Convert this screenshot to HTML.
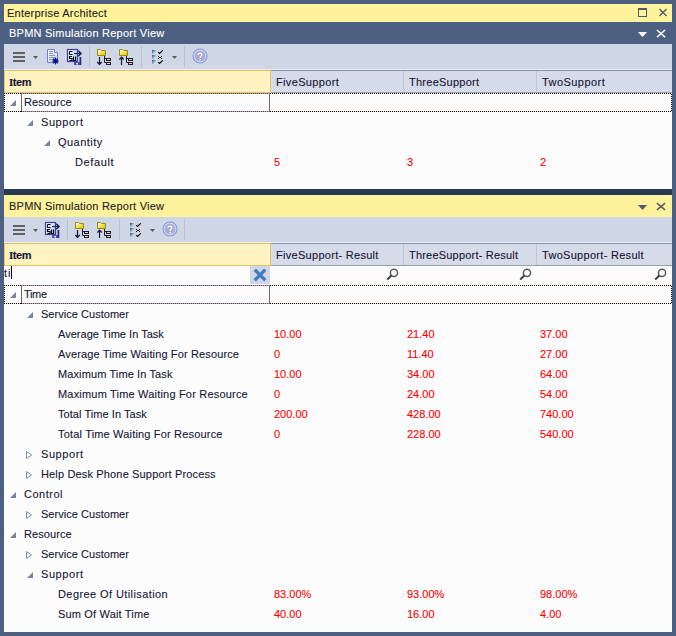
<!DOCTYPE html>
<html><head><meta charset="utf-8"><style>
html,body{margin:0;padding:0;}
body{width:676px;height:636px;overflow:hidden;position:relative;background:#4d6082;font-family:"Liberation Sans", sans-serif;font-size:11px;}
body>div{position:absolute;}
.t{white-space:pre;line-height:13px;height:13px;-webkit-text-stroke:0.1px currentColor;}
</style></head><body>
<div style="left:4px;top:4px;width:668px;height:18px;background:#fff29d;"></div>
<div class="t" style="left:7px;top:7px;color:#1e1e1e;letter-spacing:0.237px">Enterprise Architect</div>
<svg style="position:absolute;left:636px;top:6px" width="14" height="14" viewBox="0 0 14 14"><rect x="2.5" y="2.5" width="8" height="8" fill="none" stroke="#555a6a" stroke-width="1"/><rect x="2" y="2" width="9" height="2" fill="#555a6a"/></svg>
<svg style="position:absolute;left:656px;top:6px" width="14" height="14" viewBox="0 0 14 14"><path d="M3.5 3 L10.5 10 M10.5 3 L3.5 10" stroke="#555a6a" stroke-width="1.3" fill="none"/></svg>
<div class="t" style="left:9px;top:27px;color:#ffffff;letter-spacing:0.239px">BPMN Simulation Report View</div>
<svg style="position:absolute;left:636px;top:28px" width="14" height="14" viewBox="0 0 14 14"><path d="M2 4 L11 4 L6.5 9 Z" fill="#fff"/></svg>
<svg style="position:absolute;left:654px;top:27px" width="14" height="14" viewBox="0 0 14 14"><path d="M3.5 3.5 L10.5 9.6 M10.5 3.5 L3.5 9.6" stroke="#fff" stroke-width="1.5" stroke-linecap="square" fill="none"/></svg>
<div style="left:4px;top:44px;width:668px;height:25px;background:#cfd6e5;"></div>
<div style="left:4px;top:69px;width:668px;height:1px;background:#e9edf5;"></div>
<svg style="position:absolute;left:13px;top:52px" width="12" height="10" viewBox="0 0 12 10"><rect x="0" y="0" width="12" height="2" fill="#616161"/><rect x="0" y="4" width="12" height="2" fill="#616161"/><rect x="0" y="8" width="12" height="2" fill="#616161"/></svg>
<svg style="position:absolute;left:33px;top:56px" width="5" height="3" viewBox="0 0 5 3"><path d="M0 0 L5 0 L2.5 3 Z" fill="#5a5a5a"/></svg>
<svg style="position:absolute;left:46px;top:48px" width="14" height="17" viewBox="0 0 14 17"><defs><linearGradient id="dg" x1="0" y1="0" x2="1" y2="1"><stop offset="0" stop-color="#ffffff"/><stop offset="1" stop-color="#b8d8f0"/></linearGradient></defs>
<path d="M1.5 1.5 L8.5 1.5 L11.5 4.5 L11.5 14.5 L1.5 14.5 Z" fill="url(#dg)" stroke="#7a7ac8" stroke-width="1"/>
<path d="M8.5 1.5 V4.5 H11.5" fill="#fff" stroke="#7a7ac8" stroke-width="1"/>
<rect x="3" y="3" width="4" height="1" fill="#8f8fb8"/><rect x="3" y="5" width="4" height="1" fill="#8f8fb8"/><rect x="3" y="7" width="6" height="1" fill="#8f8fb8"/><rect x="3" y="9" width="6" height="1" fill="#8f8fb8"/><rect x="3" y="11" width="5" height="1" fill="#8f8fb8"/>
<circle cx="9.5" cy="13" r="2.4" fill="#1a2a9c"/><path d="M9.5 9.6 V16.4 M6.1 13 H12.9 M7.1 10.6 L11.9 15.4 M11.9 10.6 L7.1 15.4" stroke="#14208a" stroke-width="1.2"/><circle cx="9.5" cy="13" r="0.8" fill="#000"/></svg>
<svg style="position:absolute;left:66px;top:48px" width="18" height="18" viewBox="0 0 18 18"><defs><linearGradient id="cg44" x1="0" y1="0" x2="1" y2="1"><stop offset="0" stop-color="#ffffff"/><stop offset="1" stop-color="#9cc8ee"/></linearGradient></defs>
<rect x="1.5" y="1.5" width="10" height="12" fill="url(#cg44)" stroke="#3c3ca0" stroke-width="1.2"/>
<path d="M3.5 3.5 h3 M3.5 3.5 v3 M3.5 6.5 h3" stroke="#000" stroke-width="1.1" fill="none"/>
<path d="M6 8.5 h-2.5 v2 h2.5 v2 h-2.5 M7.5 8.5 v4 h2 v-4" stroke="#000" stroke-width="1.1" fill="none"/>
<path d="M8 5.5 H14.8" stroke="#1e1e50" stroke-width="1.2"/><path d="M12.3 2.8 L15 5.5 L12.3 8.2" stroke="#1e1e50" stroke-width="1.5" fill="none"/>
<rect x="8" y="14" width="7" height="3" fill="#5050b0"/><rect x="13.5" y="9" width="1.8" height="8" fill="#2a2a80"/><rect x="10.5" y="15" width="1.5" height="1.5" fill="#fff"/></svg>
<div style="left:89px;top:46px;width:1px;height:21px;background:#b9c0cf;"></div>
<div style="left:141px;top:46px;width:1px;height:21px;background:#b9c0cf;"></div>
<div style="left:184px;top:46px;width:1px;height:21px;background:#b9c0cf;"></div>
<svg style="position:absolute;left:97px;top:48px" width="16" height="18" viewBox="0 0 16 18"><defs><linearGradient id="fg440" x1="0" y1="0" x2="1" y2="1"><stop offset="0" stop-color="#ffffff"/><stop offset="0.8" stop-color="#e6d000"/></linearGradient></defs>
<path d="M0.5 1.5 V7.5 H8.5 V2.5 H4.5 L3.5 1.5 Z" fill="url(#fg440)" stroke="#9c8a14" stroke-width="1"/><path d="M2.5 9 V16.5" stroke="#1a1a3a" stroke-width="1.2"/><path d="M0.3 14 L2.5 16.3 L4.7 14" stroke="#1a1a3a" stroke-width="1.4" fill="none"/>
<path d="M7.5 8 V14.5 M7.5 10.5 H9 M7.5 14.5 H9" stroke="#1a1a3a" stroke-width="1" fill="none"/>
<rect x="9.5" y="10.5" width="4" height="2" fill="#f4dc60" stroke="#1a1a3a" stroke-width="1"/>
<rect x="9.5" y="14.5" width="4" height="2" fill="#f4dc60" stroke="#1a1a3a" stroke-width="1"/></svg>
<svg style="position:absolute;left:119px;top:48px" width="16" height="18" viewBox="0 0 16 18"><defs><linearGradient id="fg441" x1="0" y1="0" x2="1" y2="1"><stop offset="0" stop-color="#ffffff"/><stop offset="0.8" stop-color="#e6d000"/></linearGradient></defs>
<path d="M0.5 1.5 V7.5 H8.5 V2.5 H4.5 L3.5 1.5 Z" fill="url(#fg441)" stroke="#9c8a14" stroke-width="1"/><path d="M2.5 9.3 V17" stroke="#1a1a3a" stroke-width="1.2"/><path d="M0.3 11.6 L2.5 9.3 L4.7 11.6" stroke="#1a1a3a" stroke-width="1.4" fill="none"/>
<path d="M7.5 8 V14.5 M7.5 10.5 H9 M7.5 14.5 H9" stroke="#1a1a3a" stroke-width="1" fill="none"/>
<rect x="9.5" y="10.5" width="4" height="2" fill="#f4dc60" stroke="#1a1a3a" stroke-width="1"/>
<rect x="9.5" y="14.5" width="4" height="2" fill="#f4dc60" stroke="#1a1a3a" stroke-width="1"/></svg>
<svg style="position:absolute;left:152px;top:50px" width="13" height="15" viewBox="0 0 13 15"><defs><linearGradient id="kg44" x1="0" y1="0" x2="1" y2="1"><stop offset="0" stop-color="#34424c"/><stop offset="0.6" stop-color="#a8c8e0"/><stop offset="1" stop-color="#e0f0fc"/></linearGradient></defs>
<rect x="0" y="0" width="4" height="4" fill="url(#kg44)"/><rect x="0" y="5" width="4" height="4" fill="url(#kg44)"/><rect x="0" y="10" width="4" height="4" fill="url(#kg44)"/>
<path d="M6.2 2.2 L7.5 3.5 L10.8 0.3" stroke="#000" stroke-width="1.05" fill="none"/>
<rect x="6" y="6" width="1" height="1" fill="#000"/><rect x="9" y="6" width="1" height="1" fill="#000"/><rect x="7" y="7" width="1" height="1" fill="#000"/><rect x="8" y="7" width="1" height="1" fill="#000"/><rect x="6" y="8" width="1" height="1" fill="#000"/><rect x="9" y="8" width="1" height="1" fill="#000"/>
<path d="M6.2 12.2 L7.5 13.5 L10.8 10.3" stroke="#000" stroke-width="1.05" fill="none"/></svg>
<svg style="position:absolute;left:172px;top:56px" width="5" height="3" viewBox="0 0 5 3"><path d="M0 0 L5 0 L2.5 3 Z" fill="#5a5a5a"/></svg>
<svg style="position:absolute;left:191.5px;top:48.3px" width="16" height="16" viewBox="0 0 16 16"><circle cx="8" cy="8" r="7" fill="#dfe3f4" stroke="#7f98dc" stroke-width="1.1"/><circle cx="8" cy="8" r="5.5" fill="#a9abd9"/><path d="M6 7 Q6 5.1 8 5.1 Q10 5.1 10 6.7 Q10 7.7 8.3 8.6 V10" stroke="#fff" stroke-width="1.1" fill="none"/><rect x="7.6" y="11" width="1.4" height="1.4" fill="#fff"/></svg>
<div style="left:270px;top:70px;width:402px;height:1px;background:#8793a8;"></div>
<div style="left:270px;top:71px;width:402px;height:21px;background:#d6dbe9;"></div>
<div style="left:270px;top:92px;width:402px;height:1px;background:#96a0b4;"></div>
<div style="left:403px;top:71px;width:1px;height:21px;background:#bfc5d2;"></div>
<div style="left:536px;top:71px;width:1px;height:21px;background:#bfc5d2;"></div>
<div style="left:4px;top:70px;width:267px;height:23px;background:#e5c365;"></div>
<div style="left:5px;top:71px;width:265px;height:21px;background:#fff2c1;"></div>
<div class="t" style="left:9px;top:76px;color:#161634;font-weight:bold;letter-spacing:-0.450px"><span style="font-family:'Liberation Serif'">I</span>tem</div>
<div class="t" style="left:276px;top:76px;color:#161634;letter-spacing:0.350px">FiveSupport</div>
<div class="t" style="left:409px;top:76px;color:#161634;letter-spacing:0.255px">ThreeSupport</div>
<div class="t" style="left:542px;top:76px;color:#161634;letter-spacing:0.445px">TwoSupport</div>
<div style="left:4px;top:93px;width:668px;height:96px;background:#fcfcfc;"></div>
<div style="left:4px;top:93px;width:17px;height:1px;background:repeating-linear-gradient(90deg,#000 0 1px,#fde7cc 1px 2px)"></div>
<div style="left:22px;top:93px;width:247px;height:1px;background:repeating-linear-gradient(90deg,#a4a8aa 0 1px,#773a5e 1px 2px)"></div>
<div style="left:270px;top:93px;width:402px;height:1px;background:repeating-linear-gradient(90deg,#000 0 1px,#fde7cc 1px 2px)"></div>
<div style="left:4px;top:111px;width:17px;height:1px;background:repeating-linear-gradient(90deg,#000 0 1px,#fde7cc 1px 2px)"></div>
<div style="left:22px;top:111px;width:247px;height:1px;background:repeating-linear-gradient(90deg,#a4a8aa 0 1px,#773a5e 1px 2px)"></div>
<div style="left:270px;top:111px;width:402px;height:1px;background:repeating-linear-gradient(90deg,#000 0 1px,#fde7cc 1px 2px)"></div>
<div style="left:4px;top:94px;width:1px;height:17px;background:repeating-linear-gradient(180deg,#fde7cc 0 1px,#000 1px 2px)"></div>
<div style="left:671px;top:94px;width:1px;height:17px;background:repeating-linear-gradient(180deg,#000 0 1px,#fde7cc 1px 2px)"></div>
<div style="left:21px;top:93px;width:1px;height:18px;background:#6a6a6a;"></div>
<div style="left:269px;top:93px;width:1px;height:19px;background:#6a6a6a;"></div>
<div style="left:20px;top:111px;width:2px;height:1px;background:#000;"></div>
<svg style="position:absolute;left:10px;top:100px" width="6" height="6" viewBox="0 0 6 6"><path d="M0 6 L6 6 L6 0 Z" fill="#7a8599"/></svg>
<div class="t" style="left:24px;top:96px;color:#161634;letter-spacing:0.071px">Resource</div>
<svg style="position:absolute;left:27px;top:120px" width="6" height="6" viewBox="0 0 6 6"><path d="M0 6 L6 6 L6 0 Z" fill="#7a8599"/></svg>
<div class="t" style="left:41px;top:116px;color:#161634;letter-spacing:0.584px">Support</div>
<svg style="position:absolute;left:44px;top:140px" width="6" height="6" viewBox="0 0 6 6"><path d="M0 6 L6 6 L6 0 Z" fill="#7a8599"/></svg>
<div class="t" style="left:58px;top:136px;color:#161634;letter-spacing:0.457px">Quantity</div>
<div class="t" style="left:75px;top:156px;color:#161634;letter-spacing:0.634px">Default</div>
<div class="t" style="left:274px;top:156px;color:#ff0000;letter-spacing:0.000px">5</div>
<div class="t" style="left:407px;top:156px;color:#ff0000;letter-spacing:0.000px">3</div>
<div class="t" style="left:540px;top:156px;color:#ff0000;letter-spacing:0.000px">2</div>
<div style="left:4px;top:189px;width:668px;height:6px;background:#293955;"></div>
<div style="left:4px;top:195px;width:668px;height:22px;background:#fff29d;"></div>
<div class="t" style="left:9px;top:200px;color:#1e1e1e;letter-spacing:0.231px">BPMN Simulation Report View</div>
<svg style="position:absolute;left:636px;top:201px" width="14" height="14" viewBox="0 0 14 14"><path d="M2 4 L11 4 L6.5 9 Z" fill="#555a6a"/></svg>
<svg style="position:absolute;left:654px;top:200px" width="14" height="14" viewBox="0 0 14 14"><path d="M3.5 3.6 L10.5 9.4 M10.5 3.6 L3.5 9.4" stroke="#555a6a" stroke-width="1.5" stroke-linecap="square" fill="none"/></svg>
<div style="left:4px;top:217px;width:668px;height:25px;background:#cfd6e5;"></div>
<div style="left:4px;top:242px;width:668px;height:1px;background:#e9edf5;"></div>
<svg style="position:absolute;left:13px;top:225px" width="12" height="10" viewBox="0 0 12 10"><rect x="0" y="0" width="12" height="2" fill="#616161"/><rect x="0" y="4" width="12" height="2" fill="#616161"/><rect x="0" y="8" width="12" height="2" fill="#616161"/></svg>
<svg style="position:absolute;left:33px;top:229px" width="5" height="3" viewBox="0 0 5 3"><path d="M0 0 L5 0 L2.5 3 Z" fill="#5a5a5a"/></svg>
<svg style="position:absolute;left:44px;top:221px" width="18" height="18" viewBox="0 0 18 18"><defs><linearGradient id="cg217" x1="0" y1="0" x2="1" y2="1"><stop offset="0" stop-color="#ffffff"/><stop offset="1" stop-color="#9cc8ee"/></linearGradient></defs>
<rect x="1.5" y="1.5" width="10" height="12" fill="url(#cg217)" stroke="#3c3ca0" stroke-width="1.2"/>
<path d="M3.5 3.5 h3 M3.5 3.5 v3 M3.5 6.5 h3" stroke="#000" stroke-width="1.1" fill="none"/>
<path d="M6 8.5 h-2.5 v2 h2.5 v2 h-2.5 M7.5 8.5 v4 h2 v-4" stroke="#000" stroke-width="1.1" fill="none"/>
<path d="M8 5.5 H14.8" stroke="#1e1e50" stroke-width="1.2"/><path d="M12.3 2.8 L15 5.5 L12.3 8.2" stroke="#1e1e50" stroke-width="1.5" fill="none"/>
<rect x="8" y="14" width="7" height="3" fill="#5050b0"/><rect x="13.5" y="9" width="1.8" height="8" fill="#2a2a80"/><rect x="10.5" y="15" width="1.5" height="1.5" fill="#fff"/></svg>
<div style="left:67px;top:219px;width:1px;height:21px;background:#b9c0cf;"></div>
<div style="left:119px;top:219px;width:1px;height:21px;background:#b9c0cf;"></div>
<div style="left:184px;top:219px;width:1px;height:21px;background:#b9c0cf;"></div>
<svg style="position:absolute;left:75px;top:221px" width="16" height="18" viewBox="0 0 16 18"><defs><linearGradient id="fg2170" x1="0" y1="0" x2="1" y2="1"><stop offset="0" stop-color="#ffffff"/><stop offset="0.8" stop-color="#e6d000"/></linearGradient></defs>
<path d="M0.5 1.5 V7.5 H8.5 V2.5 H4.5 L3.5 1.5 Z" fill="url(#fg2170)" stroke="#9c8a14" stroke-width="1"/><path d="M2.5 9 V16.5" stroke="#1a1a3a" stroke-width="1.2"/><path d="M0.3 14 L2.5 16.3 L4.7 14" stroke="#1a1a3a" stroke-width="1.4" fill="none"/>
<path d="M7.5 8 V14.5 M7.5 10.5 H9 M7.5 14.5 H9" stroke="#1a1a3a" stroke-width="1" fill="none"/>
<rect x="9.5" y="10.5" width="4" height="2" fill="#f4dc60" stroke="#1a1a3a" stroke-width="1"/>
<rect x="9.5" y="14.5" width="4" height="2" fill="#f4dc60" stroke="#1a1a3a" stroke-width="1"/></svg>
<svg style="position:absolute;left:97px;top:221px" width="16" height="18" viewBox="0 0 16 18"><defs><linearGradient id="fg2171" x1="0" y1="0" x2="1" y2="1"><stop offset="0" stop-color="#ffffff"/><stop offset="0.8" stop-color="#e6d000"/></linearGradient></defs>
<path d="M0.5 1.5 V7.5 H8.5 V2.5 H4.5 L3.5 1.5 Z" fill="url(#fg2171)" stroke="#9c8a14" stroke-width="1"/><path d="M2.5 9.3 V17" stroke="#1a1a3a" stroke-width="1.2"/><path d="M0.3 11.6 L2.5 9.3 L4.7 11.6" stroke="#1a1a3a" stroke-width="1.4" fill="none"/>
<path d="M7.5 8 V14.5 M7.5 10.5 H9 M7.5 14.5 H9" stroke="#1a1a3a" stroke-width="1" fill="none"/>
<rect x="9.5" y="10.5" width="4" height="2" fill="#f4dc60" stroke="#1a1a3a" stroke-width="1"/>
<rect x="9.5" y="14.5" width="4" height="2" fill="#f4dc60" stroke="#1a1a3a" stroke-width="1"/></svg>
<svg style="position:absolute;left:130px;top:223px" width="13" height="15" viewBox="0 0 13 15"><defs><linearGradient id="kg217" x1="0" y1="0" x2="1" y2="1"><stop offset="0" stop-color="#34424c"/><stop offset="0.6" stop-color="#a8c8e0"/><stop offset="1" stop-color="#e0f0fc"/></linearGradient></defs>
<rect x="0" y="0" width="4" height="4" fill="url(#kg217)"/><rect x="0" y="5" width="4" height="4" fill="url(#kg217)"/><rect x="0" y="10" width="4" height="4" fill="url(#kg217)"/>
<path d="M6.2 2.2 L7.5 3.5 L10.8 0.3" stroke="#000" stroke-width="1.05" fill="none"/>
<rect x="6" y="6" width="1" height="1" fill="#000"/><rect x="9" y="6" width="1" height="1" fill="#000"/><rect x="7" y="7" width="1" height="1" fill="#000"/><rect x="8" y="7" width="1" height="1" fill="#000"/><rect x="6" y="8" width="1" height="1" fill="#000"/><rect x="9" y="8" width="1" height="1" fill="#000"/>
<path d="M6.2 12.2 L7.5 13.5 L10.8 10.3" stroke="#000" stroke-width="1.05" fill="none"/></svg>
<svg style="position:absolute;left:150px;top:229px" width="5" height="3" viewBox="0 0 5 3"><path d="M0 0 L5 0 L2.5 3 Z" fill="#5a5a5a"/></svg>
<svg style="position:absolute;left:161.5px;top:221.3px" width="16" height="16" viewBox="0 0 16 16"><circle cx="8" cy="8" r="7" fill="#dfe3f4" stroke="#7f98dc" stroke-width="1.1"/><circle cx="8" cy="8" r="5.5" fill="#a9abd9"/><path d="M6 7 Q6 5.1 8 5.1 Q10 5.1 10 6.7 Q10 7.7 8.3 8.6 V10" stroke="#fff" stroke-width="1.1" fill="none"/><rect x="7.6" y="11" width="1.4" height="1.4" fill="#fff"/></svg>
<div style="left:270px;top:243px;width:402px;height:1px;background:#8793a8;"></div>
<div style="left:270px;top:244px;width:402px;height:21px;background:#d6dbe9;"></div>
<div style="left:270px;top:265px;width:402px;height:1px;background:#96a0b4;"></div>
<div style="left:403px;top:244px;width:1px;height:21px;background:#bfc5d2;"></div>
<div style="left:536px;top:244px;width:1px;height:21px;background:#bfc5d2;"></div>
<div style="left:4px;top:243px;width:267px;height:23px;background:#e5c365;"></div>
<div style="left:5px;top:244px;width:265px;height:21px;background:#fff2c1;"></div>
<div class="t" style="left:9px;top:249px;color:#161634;font-weight:bold;letter-spacing:-0.450px"><span style="font-family:'Liberation Serif'">I</span>tem</div>
<div class="t" style="left:276px;top:249px;color:#161634;letter-spacing:0.289px">FiveSupport- Result</div>
<div class="t" style="left:409px;top:249px;color:#161634;letter-spacing:0.200px">ThreeSupport- Result</div>
<div class="t" style="left:542px;top:249px;color:#161634;letter-spacing:0.294px">TwoSupport- Result</div>
<div style="left:4px;top:266px;width:668px;height:366px;background:#fcfcfc;"></div>
<div class="t" style="left:4px;top:267px;color:#161634;letter-spacing:1.000px">ti</div>
<div style="left:11px;top:266px;width:1px;height:13px;background:#000;"></div>
<div style="left:250px;top:266px;width:20px;height:18px;background:#cfd6e5;"></div>
<svg style="position:absolute;left:252px;top:267px" width="16" height="16" viewBox="0 0 16 16"><path d="M3.9 3.9 L12.1 12.1 M12.1 3.9 L3.9 12.1" stroke="#3f7cbf" stroke-width="3.3" stroke-linecap="square" fill="none"/></svg>
<svg style="position:absolute;left:386px;top:267px" width="14" height="14" viewBox="0 0 14 14"><circle cx="8" cy="5.8" r="3.6" fill="none" stroke="#5c5c5c" stroke-width="1.5"/><path d="M5.3 8.5 L1.2 12.6" stroke="#3a3a3a" stroke-width="2"/></svg>
<svg style="position:absolute;left:519px;top:267px" width="14" height="14" viewBox="0 0 14 14"><circle cx="8" cy="5.8" r="3.6" fill="none" stroke="#5c5c5c" stroke-width="1.5"/><path d="M5.3 8.5 L1.2 12.6" stroke="#3a3a3a" stroke-width="2"/></svg>
<svg style="position:absolute;left:654px;top:267px" width="14" height="14" viewBox="0 0 14 14"><circle cx="8" cy="5.8" r="3.6" fill="none" stroke="#5c5c5c" stroke-width="1.5"/><path d="M5.3 8.5 L1.2 12.6" stroke="#3a3a3a" stroke-width="2"/></svg>
<div style="left:4px;top:285px;width:17px;height:1px;background:repeating-linear-gradient(90deg,#000 0 1px,#fde7cc 1px 2px)"></div>
<div style="left:22px;top:285px;width:247px;height:1px;background:repeating-linear-gradient(90deg,#a4a8aa 0 1px,#773a5e 1px 2px)"></div>
<div style="left:270px;top:285px;width:402px;height:1px;background:repeating-linear-gradient(90deg,#000 0 1px,#fde7cc 1px 2px)"></div>
<div style="left:4px;top:303px;width:17px;height:1px;background:repeating-linear-gradient(90deg,#000 0 1px,#fde7cc 1px 2px)"></div>
<div style="left:22px;top:303px;width:247px;height:1px;background:repeating-linear-gradient(90deg,#a4a8aa 0 1px,#773a5e 1px 2px)"></div>
<div style="left:270px;top:303px;width:402px;height:1px;background:repeating-linear-gradient(90deg,#000 0 1px,#fde7cc 1px 2px)"></div>
<div style="left:4px;top:286px;width:1px;height:17px;background:repeating-linear-gradient(180deg,#fde7cc 0 1px,#000 1px 2px)"></div>
<div style="left:671px;top:286px;width:1px;height:17px;background:repeating-linear-gradient(180deg,#000 0 1px,#fde7cc 1px 2px)"></div>
<div style="left:21px;top:285px;width:1px;height:18px;background:#6a6a6a;"></div>
<div style="left:269px;top:285px;width:1px;height:19px;background:#6a6a6a;"></div>
<div style="left:20px;top:303px;width:2px;height:1px;background:#000;"></div>
<svg style="position:absolute;left:10px;top:292px" width="6" height="6" viewBox="0 0 6 6"><path d="M0 6 L6 6 L6 0 Z" fill="#7a8599"/></svg>
<div class="t" style="left:24px;top:288px;color:#161634;letter-spacing:-0.333px">Time</div>
<svg style="position:absolute;left:27px;top:312px" width="6" height="6" viewBox="0 0 6 6"><path d="M0 6 L6 6 L6 0 Z" fill="#7a8599"/></svg>
<div class="t" style="left:41px;top:308px;color:#161634;letter-spacing:0.033px">Service Customer</div>
<div class="t" style="left:58px;top:328px;color:#161634;letter-spacing:0.026px">Average Time In Task</div>
<div class="t" style="left:274px;top:328px;color:#ff0000;letter-spacing:0.000px">10.00</div>
<div class="t" style="left:407px;top:328px;color:#ff0000;letter-spacing:0.000px">21.40</div>
<div class="t" style="left:540px;top:328px;color:#ff0000;letter-spacing:0.000px">37.00</div>
<div class="t" style="left:58px;top:348px;color:#161634;letter-spacing:0.134px">Average Time Waiting For Resource</div>
<div class="t" style="left:274px;top:348px;color:#ff0000;letter-spacing:0.000px">0</div>
<div class="t" style="left:407px;top:348px;color:#ff0000;letter-spacing:0.000px">11.40</div>
<div class="t" style="left:540px;top:348px;color:#ff0000;letter-spacing:0.000px">27.00</div>
<div class="t" style="left:58px;top:368px;color:#161634;letter-spacing:0.111px">Maximum Time In Task</div>
<div class="t" style="left:274px;top:368px;color:#ff0000;letter-spacing:0.000px">10.00</div>
<div class="t" style="left:407px;top:368px;color:#ff0000;letter-spacing:0.000px">34.00</div>
<div class="t" style="left:540px;top:368px;color:#ff0000;letter-spacing:0.000px">64.00</div>
<div class="t" style="left:58px;top:388px;color:#161634;letter-spacing:0.191px">Maximum Time Waiting For Resource</div>
<div class="t" style="left:274px;top:388px;color:#ff0000;letter-spacing:0.000px">0</div>
<div class="t" style="left:407px;top:388px;color:#ff0000;letter-spacing:0.000px">24.00</div>
<div class="t" style="left:540px;top:388px;color:#ff0000;letter-spacing:0.000px">54.00</div>
<div class="t" style="left:58px;top:408px;color:#161634;letter-spacing:0.059px">Total Time In Task</div>
<div class="t" style="left:274px;top:408px;color:#ff0000;letter-spacing:0.000px">200.00</div>
<div class="t" style="left:407px;top:408px;color:#ff0000;letter-spacing:0.000px">428.00</div>
<div class="t" style="left:540px;top:408px;color:#ff0000;letter-spacing:0.000px">740.00</div>
<div class="t" style="left:58px;top:428px;color:#161634;letter-spacing:0.176px">Total Time Waiting For Resource</div>
<div class="t" style="left:274px;top:428px;color:#ff0000;letter-spacing:0.000px">0</div>
<div class="t" style="left:407px;top:428px;color:#ff0000;letter-spacing:0.000px">228.00</div>
<div class="t" style="left:540px;top:428px;color:#ff0000;letter-spacing:0.000px">540.00</div>
<svg style="position:absolute;left:26px;top:451px" width="7" height="9" viewBox="0 0 7 9"><path d="M0.5 0.5 L5.6 4 L0.5 7.5 Z" fill="none" stroke="#8490a5" stroke-width="1"/></svg>
<div class="t" style="left:41px;top:448px;color:#161634;letter-spacing:0.584px">Support</div>
<svg style="position:absolute;left:26px;top:471px" width="7" height="9" viewBox="0 0 7 9"><path d="M0.5 0.5 L5.6 4 L0.5 7.5 Z" fill="none" stroke="#8490a5" stroke-width="1"/></svg>
<div class="t" style="left:41px;top:468px;color:#161634;letter-spacing:0.153px">Help Desk Phone Support Process</div>
<svg style="position:absolute;left:10px;top:492px" width="6" height="6" viewBox="0 0 6 6"><path d="M0 6 L6 6 L6 0 Z" fill="#7a8599"/></svg>
<div class="t" style="left:24px;top:488px;color:#161634;letter-spacing:0.500px">Control</div>
<svg style="position:absolute;left:26px;top:511px" width="7" height="9" viewBox="0 0 7 9"><path d="M0.5 0.5 L5.6 4 L0.5 7.5 Z" fill="none" stroke="#8490a5" stroke-width="1"/></svg>
<div class="t" style="left:41px;top:508px;color:#161634;letter-spacing:0.033px">Service Customer</div>
<svg style="position:absolute;left:10px;top:532px" width="6" height="6" viewBox="0 0 6 6"><path d="M0 6 L6 6 L6 0 Z" fill="#7a8599"/></svg>
<div class="t" style="left:24px;top:528px;color:#161634;letter-spacing:0.071px">Resource</div>
<svg style="position:absolute;left:26px;top:551px" width="7" height="9" viewBox="0 0 7 9"><path d="M0.5 0.5 L5.6 4 L0.5 7.5 Z" fill="none" stroke="#8490a5" stroke-width="1"/></svg>
<div class="t" style="left:41px;top:548px;color:#161634;letter-spacing:0.033px">Service Customer</div>
<svg style="position:absolute;left:27px;top:572px" width="6" height="6" viewBox="0 0 6 6"><path d="M0 6 L6 6 L6 0 Z" fill="#7a8599"/></svg>
<div class="t" style="left:41px;top:568px;color:#161634;letter-spacing:0.584px">Support</div>
<div class="t" style="left:58px;top:588px;color:#161634;letter-spacing:0.410px">Degree Of Utilisation</div>
<div class="t" style="left:274px;top:588px;color:#ff0000;letter-spacing:0.000px">83.00%</div>
<div class="t" style="left:407px;top:588px;color:#ff0000;letter-spacing:0.000px">93.00%</div>
<div class="t" style="left:540px;top:588px;color:#ff0000;letter-spacing:0.000px">98.00%</div>
<div class="t" style="left:58px;top:608px;color:#161634;letter-spacing:0.173px">Sum Of Wait Time</div>
<div class="t" style="left:274px;top:608px;color:#ff0000;letter-spacing:0.000px">40.00</div>
<div class="t" style="left:407px;top:608px;color:#ff0000;letter-spacing:0.000px">16.00</div>
<div class="t" style="left:540px;top:608px;color:#ff0000;letter-spacing:0.000px">4.00</div>
</body></html>
